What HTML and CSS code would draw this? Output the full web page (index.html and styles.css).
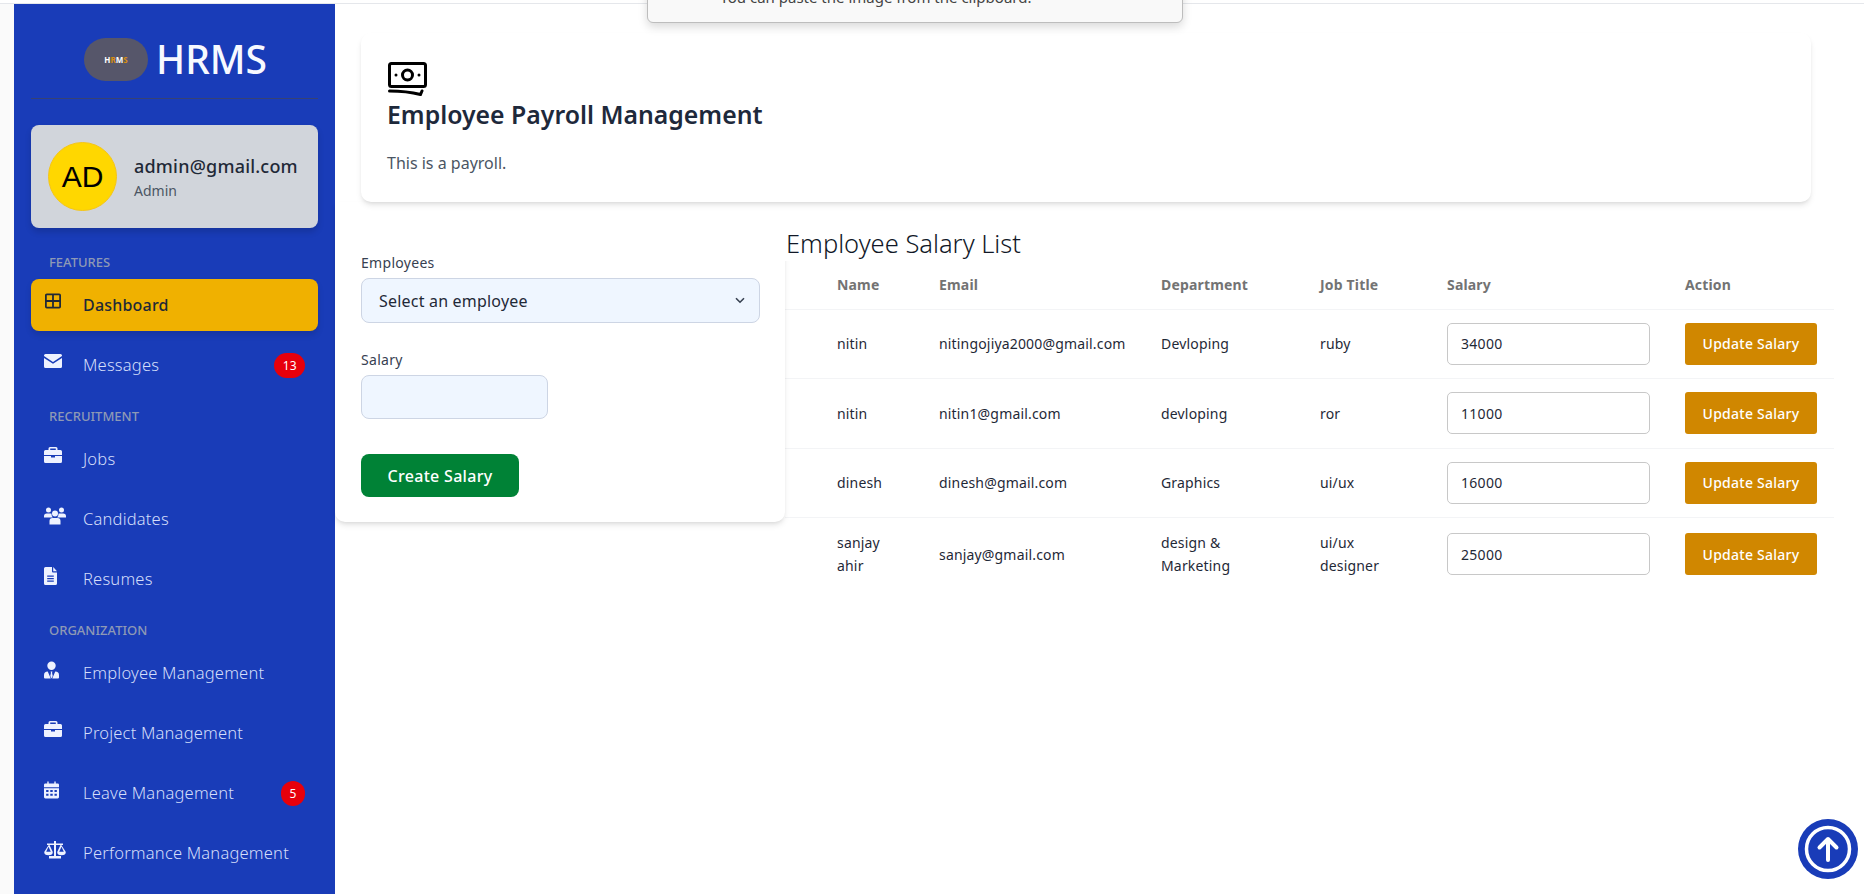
FILE: index.html
```html
<!DOCTYPE html>
<html lang="en">
<head>
    <meta charset="UTF-8">
    <meta name="viewport" content="width=device-width, initial-scale=1.0">
    <title>HRMS - Employee Payroll Management</title>
    <link rel="stylesheet" href="styles.css">
</head>
<body>
    <div class="paste-popup"><p>You can paste the image from the clipboard.</p></div>

    <div class="page">
        <aside class="sidebar">
            <div class="brand">
                <div class="brand-logo"><span class="w">H</span><span class="o">R</span><span class="w">M</span><span class="o">S</span></div>
                <span class="brand-name">HRMS</span>
            </div>

            <div class="user-card">
                <div class="avatar">AD</div>
                <div>
                    <div class="user-mail">admin@gmail.com</div>
                    <div class="user-role">Admin</div>
                </div>
            </div>

            <div class="nav-title first">FEATURES</div>
            <a class="nav-item active">
                <svg class="nav-icon" viewBox="0 0 18 18"><path fill="none" stroke="currentColor" stroke-width="2" d="M2 1.5h14a1 1 0 0 1 1 1v13a1 1 0 0 1-1 1H2a1 1 0 0 1-1-1v-13a1 1 0 0 1 1-1zM1 9h16M9 1.5v15"/></svg>
                <span>Dashboard</span>
            </a>
            <a class="nav-item short">
                <svg class="nav-icon" viewBox="0 0 18 14"><path fill="currentColor" d="M1.5 0h15A1.5 1.5 0 0 1 18 1.5v.6L9 8 0 2.100v-.6A1.500 1.500 0 0 1 1.500 0zM0 4l9 5.800L18 4v8.500a1.500 1.500 0 0 1-1.500 1.500h-15A1.500 1.500 0 0 1 0 12.500z"/></svg>
                <span>Messages</span>
                <b class="badge">13</b>
            </a>

            <div class="nav-title">RECRUITMENT</div>
            <a class="nav-item">
                <svg class="nav-icon" viewBox="0 0 18 16"><path fill="currentColor" d="M6 0h6a1.500 1.500 0 0 1 1.500 1.500V3h3A1.500 1.500 0 0 1 18 4.500V8H0V4.500A1.500 1.500 0 0 1 1.500 3h3V1.500A1.500 1.500 0 0 1 6 0zm.2 1.600V3h5.600V1.600zM0 9h7v1.500h4V9h7v5.500a1.500 1.500 0 0 1-1.500 1.500h-15A1.500 1.500 0 0 1 0 14.500z"/></svg>
                <span>Jobs</span>
            </a>
            <a class="nav-item">
                <svg class="nav-icon wide" viewBox="0 0 22 17"><path fill="currentColor" d="M4.500 0a2.500 2.500 0 1 1 0 5 2.500 2.500 0 0 1 0-5zm13 0a2.500 2.500 0 1 1 0 5 2.500 2.500 0 0 1 0-5zM11 3a3 3 0 1 1 0 6 3 3 0 0 1 0-6zM2.800 6h3.400c.5 0 1 .1 1.400.3A4.200 4.200 0 0 0 8.800 10H0V8.800A2.800 2.800 0 0 1 2.800 6zm13 0h3.400A2.800 2.800 0 0 1 22 8.800V10h-8.800a4.200 4.200 0 0 0 1.200-3.700c.4-.2.900-.3 1.400-.3zM8.500 10.500h5A3 3 0 0 1 16.500 13.500V17h-11v-3.500a3 3 0 0 1 3-3z"/></svg>
                <span>Candidates</span>
            </a>
            <a class="nav-item short">
                <svg class="nav-icon narrow" viewBox="0 0 13 18"><path fill="currentColor" fill-rule="evenodd" d="M1.500 0H8v4.500A1 1 0 0 0 9 5.500h4v11a1.500 1.500 0 0 1-1.500 1.500h-10A1.500 1.500 0 0 1 0 16.500v-15A1.500 1.500 0 0 1 1.500 0zM9.200 0 13 4.300H9.200zM3.200 8.500v1.200h6.600V8.500zm0 2.500v1.200h6.600V11zm0 2.500v1.200h6.600v-1.200z"/></svg>
                <span>Resumes</span>
            </a>

            <div class="nav-title">ORGANIZATION</div>
            <a class="nav-item">
                <svg class="nav-icon tall" viewBox="0 0 16 18"><path fill="currentColor" d="M8 0a4.500 4.500 0 1 1 0 9 4.500 4.500 0 0 1 0-9zM4 10.500l3.200 7.500H1a1 1 0 0 1-1-1v-2.500a4 4 0 0 1 4-4zm8 0a4 4 0 0 1 4 4V17a1 1 0 0 1-1 1H8.800zM7 10.500h2l-.4 1.500.7 3.500L8 18l-1.300-2.500.7-3.500z"/></svg>
                <span>Employee Management</span>
            </a>
            <a class="nav-item">
                <svg class="nav-icon" viewBox="0 0 18 16"><path fill="currentColor" d="M6 0h6a1.500 1.500 0 0 1 1.500 1.500V3h3A1.500 1.500 0 0 1 18 4.500V8H0V4.500A1.500 1.500 0 0 1 1.500 3h3V1.500A1.500 1.500 0 0 1 6 0zm.2 1.600V3h5.600V1.600zM0 9h7v1.500h4V9h7v5.500a1.500 1.500 0 0 1-1.500 1.500h-15A1.500 1.500 0 0 1 0 14.500z"/></svg>
                <span>Project Management</span>
            </a>
            <a class="nav-item">
                <svg class="nav-icon tall" viewBox="0 0 16 18"><path fill="currentColor" fill-rule="evenodd" d="M3.500 0h1.500v2h6V0h1.500v2H14.500A1.500 1.500 0 0 1 16 3.500V6H0V3.500A1.500 1.500 0 0 1 1.500 2h2zM0 7h16v9.500a1.500 1.500 0 0 1-1.500 1.500h-13A1.500 1.500 0 0 1 0 16.500zm2.300 2v2h2.500V9zm4.400 0v2h2.600V9zm4.500 0v2h2.500V9zm-8.900 4v2h2.500v-2zm4.400 0v2h2.600v-2zm4.500 0v2h2.500v-2z"/></svg>
                <span>Leave Management</span>
                <b class="badge">5</b>
            </a>
            <a class="nav-item">
                <svg class="nav-icon wide" viewBox="0 0 22 18"><path fill="currentColor" fill-rule="evenodd" d="M10 0h2v2.500h7V4h-1.700L21.800 11a4.300 3.300 0 0 1-8.600 0L16.500 4h-4.500v11h5v2.500H5V15h5V4H5.500l3.300 7a4.300 3.300 0 0 1-8.600 0L4.700 4H3V2.500h7zM4.500 5.800 2.200 10.800h4.600zm13 0-2.300 5h4.600z"/></svg>
                <span>Performance Management</span>
            </a>
        </aside>

        <main class="content">
            <section class="head-card">
                <svg class="money-icon" viewBox="0 0 40 34"><g fill="none" stroke="#000" stroke-width="3"><rect x="1.500" y="1.500" width="36" height="23" rx="2"/><circle cx="19.500" cy="13" r="5"/><path stroke-linecap="round" d="M1.500 29c10 0 21 1 31 3.500l1.500-3.500"/></g><circle cx="8" cy="13" r="1.500"/><circle cx="31" cy="13" r="1.500"/></svg>
                <h1>Employee Payroll Management</h1>
                <p>This is a payroll.</p>
            </section>

            <div class="columns">
                <form class="salary-form">
                    <label for="employee">Employees</label>
                    <div class="select-wrap">
                        <select id="employee"><option>Select an employee</option></select>
                        <svg class="chevron" viewBox="0 0 10 7"><path fill="none" stroke="#374151" stroke-width="1.600" d="M1 1.200l4 4 4-4"/></svg>
                    </div>
                    <label for="salary" class="salary-label">Salary</label>
                    <input id="salary" class="salary-input" type="text">
                    <button type="button" class="create-btn">Create Salary</button>
                </form>

                <section class="list">
                    <h2>Employee Salary List</h2>
                    <table>
                        <colgroup>
                            <col class="c-blank"><col class="c-name"><col class="c-email"><col class="c-dept"><col class="c-job"><col class="c-sal"><col class="c-act">
                        </colgroup>
                        <thead>
                            <tr><th></th><th>Name</th><th>Email</th><th>Department</th><th>Job Title</th><th>Salary</th><th>Action</th></tr>
                        </thead>
                        <tbody>
                            <tr>
                                <td></td><td>nitin</td><td>nitingojiya2000@gmail.com</td><td>Devloping</td><td>ruby</td>
                                <td><input type="text" value="34000"></td>
                                <td><button type="button">Update Salary</button></td>
                            </tr>
                            <tr>
                                <td></td><td>nitin</td><td>nitin1@gmail.com</td><td>devloping</td><td>ror</td>
                                <td><input type="text" value="11000"></td>
                                <td><button type="button">Update Salary</button></td>
                            </tr>
                            <tr>
                                <td></td><td>dinesh</td><td>dinesh@gmail.com</td><td>Graphics</td><td>ui/ux</td>
                                <td><input type="text" value="16000"></td>
                                <td><button type="button">Update Salary</button></td>
                            </tr>
                            <tr>
                                <td></td><td>sanjay ahir</td><td>sanjay@gmail.com</td><td>design &amp; Marketing</td><td>ui/ux designer</td>
                                <td><input type="text" value="25000"></td>
                                <td><button type="button">Update Salary</button></td>
                            </tr>
                        </tbody>
                    </table>
                </section>
            </div>
        </main>
    </div>

    <div class="to-top">
        <svg viewBox="0 0 60 60"><circle cx="30" cy="30" r="30" fill="#193cb8"/><circle cx="30" cy="30" r="21.500" fill="none" stroke="#fff" stroke-width="3.500"/><path fill="none" stroke="#fff" stroke-width="4" stroke-linecap="round" stroke-linejoin="round" d="M30 41V20M21.500 28.500 30 20l8.500 8.500"/></svg>
    </div>
</body>
</html>
```

FILE: styles.css
```css
* {
    box-sizing: border-box;
}
html, body {
    margin: 0;
    height: 100%;
    overflow: hidden;
}
body {
    background: #fff;
    color: #1f2937;
    font-family: "Noto Sans", "Open Sans", sans-serif;
    border-top: 1px solid transparent;
}

.page {
    display: flex;
    height: 890px;
    margin-top: 3px;
    box-shadow: 0 -1px 0 #e5e7eb;
    padding-left: 14px;
    background: #fafafa;
}

/* top popup */
.paste-popup {
    position: absolute;
    top: -20px;
    left: 647px;
    width: 536px;
    height: 43px;
    background: #f9f9f9;
    border: 1px solid #bdbdbd;
    border-radius: 6px;
    box-shadow: 0 4px 10px rgba(0, 0, 0, .15);
    z-index: 5;
}
.paste-popup p {
    margin: 0;
    padding: 8px 0 0 72px;
    font-size: 15px;
    line-height: 16px;
    color: #444;
}

/* sidebar */
.sidebar {
    width: 321px;
    flex: none;
    background: #193cb8;
    padding: 34px 17px 0;
    overflow: hidden;
}
.brand {
    display: flex;
    align-items: center;
    justify-content: center;
    gap: 8px;
    height: 61px;
    padding: 0 0 17px 2px;
    margin-bottom: 26px;
    border-bottom: 1px solid #374273;
}
.brand-logo {
    width: 64px;
    height: 43px;
    border-radius: 22px;
    background: #56566a;
    display: flex;
    align-items: center;
    justify-content: center;
    font-size: 8px;
    font-weight: 700;
}
.brand-logo .w { color: #fff; }
.brand-logo .o { color: #d98f0f; }
.brand-name {
    color: #f7f9ff;
    font-size: 39px;
    font-weight: 500;
    line-height: 41px;
    margin-bottom: 2px;
}

.user-card {
    display: flex;
    align-items: center;
    gap: 17px;
    height: 103px;
    padding-left: 17px;
    background: #d1d5db;
    border-radius: 8px;
    box-shadow: 0 4px 6px rgba(0, 0, 0, .15);
}
.avatar {
    width: 69px;
    height: 69px;
    flex: none;
    display: flex;
    align-items: center;
    justify-content: center;
    border-radius: 50%;
    background: #ffd700;
    border: 1px solid #f5c518;
    color: #000;
    font-family: "Liberation Sans", sans-serif;
    font-size: 30px;
}
.user-mail {
    margin-top: 2px;
    font-size: 18px;
    font-weight: 500;
    line-height: 24px;
    letter-spacing: .2px;
    color: #1f2937;
}
.user-role {
    margin-top: 2px;
    font-size: 14px;
    line-height: 22px;
    color: #4b5563;
}

.nav-title {
    color: #8e99b5;
    font-size: 13px;
    font-weight: 500;
    line-height: 16px;
    padding-left: 18px;
    margin: 19px 0 9px;
}
.nav-title.first {
    margin: 26px 0 9px;
}
.nav-item {
    display: flex;
    align-items: flex-start;
    height: 60px;
    padding: 14px 13px 0;
    border-radius: 8px;
    color: #d4defa;
    font-size: 16.5px;
    font-weight: 300;
    line-height: 24px;
    letter-spacing: .2px;
}
.nav-item.short {
    height: 50px;
}
.nav-item.active {
    height: 52px;
    margin-bottom: 8px;
    background: #f0b100;
    color: #1f2937;
    font-size: 16px;
    font-weight: 500;
    box-shadow: 0 4px 6px rgba(0, 0, 0, .12);
}
.nav-icon {
    width: 18px;
    height: 16px;
    flex: none;
    margin: 0 21px 0 0;
    color: #eef2ff;
}
.nav-item.active .nav-icon {
    color: #1f2937;
}
.nav-icon.wide {
    width: 22px;
    height: 18px;
    margin-right: 17px;
}
.nav-icon.narrow {
    width: 13px;
    height: 18px;
    margin-right: 26px;
}
.nav-icon.tall {
    width: 15px;
    height: 18px;
    margin-right: 24px;
}
.badge {
    margin-left: auto;
    min-width: 24px;
    height: 25px;
    padding: 0 8.5px;
    border-radius: 13px;
    background: #e7000b;
    color: #fff;
    font-size: 12px;
    line-height: 25px;
    text-align: center;
    letter-spacing: 0;
}

/* main area */
.content {
    flex: 1;
    min-width: 0;
    background: #fff;
}
.head-card {
    position: relative;
    z-index: 3;
    margin: 29px 53px 0 26px;
    height: 169px;
    padding: 29px 26px 0;
    background: #fff;
    border-radius: 10px;
    box-shadow: 0 4px 6px -1px rgba(0, 0, 0, .1), 0 2px 4px -2px rgba(0, 0, 0, .1);
}
.money-icon {
    display: block;
    width: 40px;
    height: 34px;
    margin-left: 1px;
}
.head-card h1 {
    margin: -2px 0 0;
    font-size: 24.8px;
    font-weight: 600;
    line-height: 40px;
    color: #1e293b;
}
.head-card p {
    margin: 17px 0 0;
    font-size: 16px;
    line-height: 24px;
    color: #4b5563;
}

.columns {
    display: flex;
    align-items: flex-start;
}
.salary-form {
    position: relative;
    z-index: 1;
    width: 450px;
    flex: none;
    height: 320px;
    padding: 51px 25px 0 26px;
    background: #fff;
    border-radius: 0 0 10px 10px;
    box-shadow: 0 4px 6px -1px rgba(0, 0, 0, .1), 0 2px 4px -2px rgba(0, 0, 0, .1);
}
.salary-form label {
    display: block;
    font-size: 14px;
    line-height: 20px;
    color: #374151;
    margin-bottom: 5px;
    letter-spacing: .3px;
}
.salary-form .salary-label {
    margin-top: 27px;
}
.select-wrap {
    position: relative;
}
.select-wrap select {
    display: block;
    width: 100%;
    height: 45px;
    padding: 0 17px;
    appearance: none;
    background: #eff6ff;
    border: 1px solid #cdd5e4;
    border-radius: 8px;
    color: #1f2937;
    font: inherit;
    font-size: 16px;
    letter-spacing: .2px;
}
.chevron {
    position: absolute;
    top: 19px;
    right: 15px;
    width: 10px;
    height: 7px;
}
.salary-input {
    display: block;
    width: 187px;
    height: 44px;
    background: #eff6ff;
    border: 1px solid #cdd5e4;
    border-radius: 8px;
}
.create-btn {
    display: block;
    margin-top: 35px;
    width: 158px;
    height: 43px;
    border: 0;
    border-radius: 8px;
    background: #008236;
    color: #fff;
    font: inherit;
    font-size: 16px;
    font-weight: 500;
    letter-spacing: .3px;
}

.list {
    flex: none;
    width: 1049px;
}
.list h2 {
    position: relative;
    z-index: 2;
    margin: 0;
    padding: 23px 0 0 1px;
    background: #fff;
    font-size: 25.5px;
    font-weight: 300;
    line-height: 36px;
    color: #111827;
}
.list table {
    width: 1049px;
    table-layout: fixed;
    border-collapse: collapse;
    font-size: 14px;
    letter-spacing: .17px;
}
.c-blank { width: 28px; }
.c-name { width: 102px; }
.c-email { width: 222px; }
.c-dept { width: 159px; }
.c-job { width: 127px; }
.c-sal { width: 238px; }
.c-act { width: 173px; }

.list th {
    height: 48px;
    padding: 0 24px;
    text-align: left;
    font-size: 14px;
    font-weight: 700;
    color: #737373;
    border-bottom: 1px solid #f3f4f6;
}
.list td {
    height: 69.5px;
    padding: 13px 24px;
    line-height: 23px;
    color: #1f2937;
    border-bottom: 1px solid #f3f4f6;
}
.list tr:last-child td {
    height: 72px;
    border-bottom: 0;
}
.list td input {
    display: block;
    width: 203px;
    height: 42px;
    padding: 0 13px;
    border: 1px solid #c8c8c8;
    border-radius: 5px;
    color: #1f2937;
    font: inherit;
    font-size: 14px;
    letter-spacing: .3px;
    background: #fff;
}
.list td button {
    display: block;
    width: 132px;
    height: 42px;
    border: 0;
    border-radius: 3px;
    background: #d08700;
    color: #fff;
    font: inherit;
    font-size: 14px;
    font-weight: 500;
    letter-spacing: .25px;
}

.to-top {
    position: fixed;
    left: 1798px;
    top: 819px;
    width: 60px;
    height: 60px;
}
.to-top svg {
    display: block;
}
```
